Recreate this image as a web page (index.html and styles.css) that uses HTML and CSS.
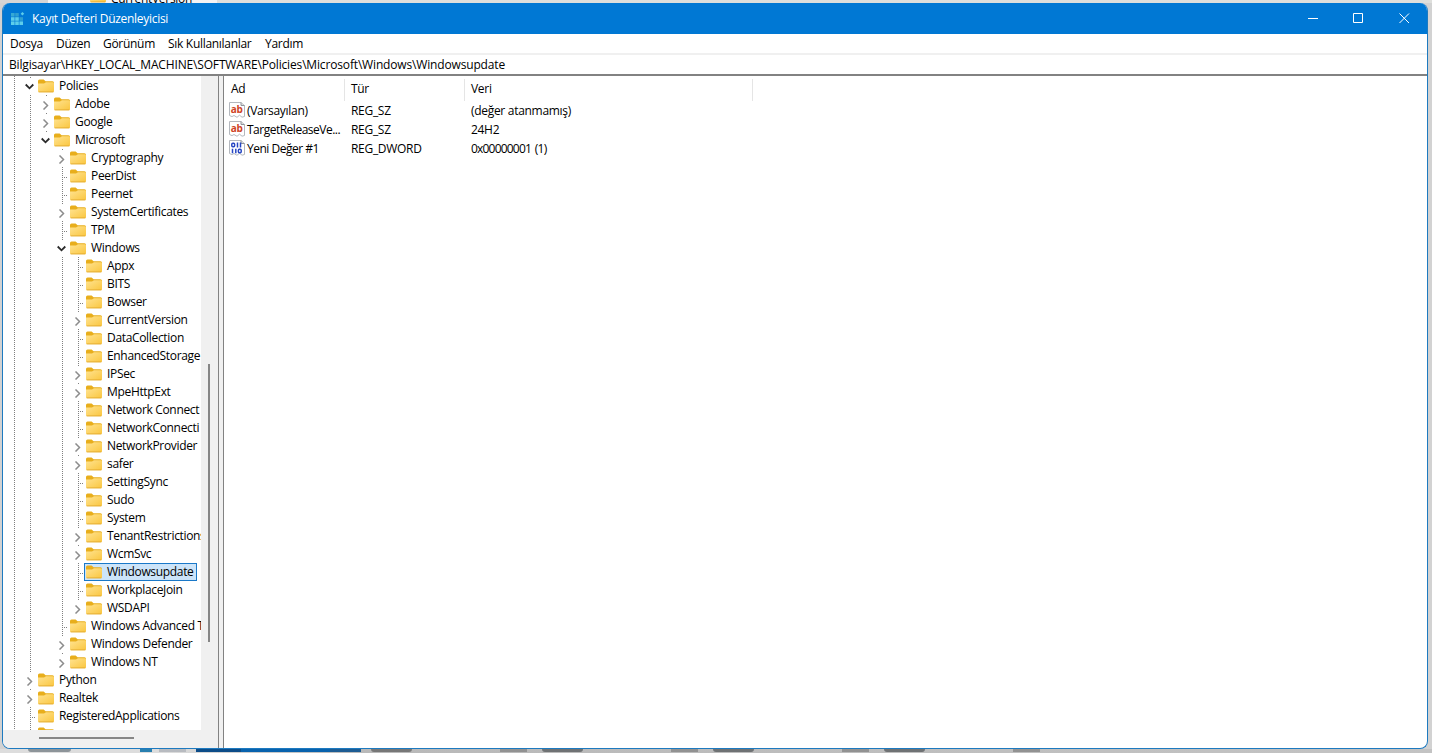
FILE: index.html
```
<!doctype html>
<html lang="tr">

<head>
    <meta charset="utf-8">
    <meta name="viewport" content="width=device-width, initial-scale=1">
    <title>Kayıt Defteri Düzenleyicisi</title>
    <link rel="stylesheet" href="styles.css">
</head>

<body>
    <svg width="0" height="0">
        <defs>
            <linearGradient id="gold" x1="0" y1="0" x2="1" y2="1">
                <stop offset="0" stop-color="#ffe391"/>
                <stop offset="1" stop-color="#fac63f"/>
            </linearGradient>
        </defs>
        <symbol id="folder" viewBox="0 0 16 14">
            <path d="M0 2Q0 .5 1.5 .5H5.6L7.6 2.3H14.5Q16 2.3 16 3.8V7H0Z" fill="#e8ae1c"/>
            <path d="M0 4.6H6L8 3.2H14.8Q16 3.2 16 4.4V12Q16 13.2 14.8 13.2H1.2Q0 13.2 0 12Z" fill="url(#gold)"/>
            <path d="M.6 12.9H15.4" stroke="#dfa62c" stroke-width=".8"/>
        </symbol>
        <symbol id="right" viewBox="0 0 9 9">
            <path d="M2.5 .5L6.5 4.5L2.5 8.5" fill="none" stroke="#8c8c8c" stroke-width="1.5"/>
        </symbol>
        <symbol id="down" viewBox="0 0 9 9">
            <path d="M.7 1.5L4.5 5.3L8.3 1.5" fill="none" stroke="#2b2b2b" stroke-width="1.8"/>
        </symbol>
        <symbol id="page" viewBox="0 0 16 16">
            <path d="M.5 .5H12L15.5 3.5V14.5L13 15.2L10.5 13.2L8 15.3L5 13.5L3 14.6L.5 13.5Z" fill="#fff" stroke="#b4b8be"/>
            <path d="M12 .5V3.5H15.5" fill="#ddd" stroke="#8f959c"/>
        </symbol>
        <symbol id="binary" viewBox="0 0 16 16">
            <use href="#page"/>
            <g fill="none" stroke="#2747c4" stroke-width="1.5">
                <rect x="2.8" y="3.2" width="2.8" height="3.6" rx="1"/>
                <path d="M8.5 2.5V7.5M11.5 2.5V7.5M3.5 8.7V13.2M6.8 8.7V13.2"/>
                <rect x="9.4" y="9.3" width="2.8" height="3.4" rx="1"/>
            </g>
        </symbol>
    </svg>

    <div class="behind">
        <svg class="behind-folder" width="16" height="14"><use href="#folder"/></svg>
        <span class="behind-text">CurrentVersion</span>
    </div>

    <div class="window">
        <div class="titlebar">
            <svg class="app-icon" width="14" height="14" viewBox="0 0 14 14">
                <g fill="#5ccdea">
                    <rect x="0" y="1" width="3.6" height="3.6" fill="#35a9d4"/>
                    <rect x="4.2" y="1" width="3.6" height="3.6" fill="#2f9fd0"/>
                    <rect x="0" y="5.2" width="3.6" height="3.6"/>
                    <rect x="4.2" y="5.2" width="3.6" height="3.6"/>
                    <rect x="8.4" y="5.2" width="3.6" height="3.6" fill="#2f9fd0"/>
                    <rect x="0" y="9.4" width="3.6" height="3.6"/>
                    <rect x="4.2" y="9.4" width="3.6" height="3.6"/>
                    <rect x="8.4" y="9.4" width="3.6" height="3.6"/>
                    <path d="M11.4 0L13.2 1.7L11.4 3.4L9.7 1.7Z"/>
                </g>
            </svg>
            <span class="title">Kayıt Defteri Düzenleyicisi</span>
            <svg class="buttons" width="102" height="12" viewBox="0 0 102 12">
                <path d="M0 5.5H10M45.5 .5H54.5V9.5H45.5ZM91.5 .5L101 10M101 .5L91.5 10" fill="none" stroke="#fff"/>
            </svg>
        </div>

        <div class="menubar">
            <span class="m-file">Dosya</span>
            <span class="m-edit">Düzen</span>
            <span class="m-view">Görünüm</span>
            <span class="m-fav">Sık Kullanılanlar</span>
            <span>Yardım</span>
        </div>
        <div class="address">Bilgisayar\HKEY_LOCAL_MACHINE\SOFTWARE\Policies\Microsoft\Windows\Windowsupdate</div>

        <div class="main">
            <div class="side">
                <div class="side-top">
                    <div class="tree">
                        <ul class="root">
                            <li>
                                <div class="row"><i><svg><use href="#down"/></svg></i><span><svg><use href="#folder"/></svg>Policies</span></div>
                                <ul>
                                    <li><div class="row"><i><svg><use href="#right"/></svg></i><span><svg><use href="#folder"/></svg>Adobe</span></div></li>
                                    <li><div class="row"><i><svg><use href="#right"/></svg></i><span><svg><use href="#folder"/></svg>Google</span></div></li>
                                    <li>
                                        <div class="row"><i><svg><use href="#down"/></svg></i><span><svg><use href="#folder"/></svg>Microsoft</span></div>
                                        <ul>
                                            <li><div class="row"><i><svg><use href="#right"/></svg></i><span><svg><use href="#folder"/></svg>Cryptography</span></div></li>
                                            <li><div class="row leaf"><i></i><span><svg><use href="#folder"/></svg>PeerDist</span></div></li>
                                            <li><div class="row leaf"><i></i><span><svg><use href="#folder"/></svg>Peernet</span></div></li>
                                            <li><div class="row"><i><svg><use href="#right"/></svg></i><span><svg><use href="#folder"/></svg>SystemCertificates</span></div></li>
                                            <li><div class="row leaf"><i></i><span><svg><use href="#folder"/></svg>TPM</span></div></li>
                                            <li>
                                                <div class="row"><i><svg><use href="#down"/></svg></i><span><svg><use href="#folder"/></svg>Windows</span></div>
                                                <ul>
                                                    <li><div class="row leaf"><i></i><span><svg><use href="#folder"/></svg>Appx</span></div></li>
                                                    <li><div class="row leaf"><i></i><span><svg><use href="#folder"/></svg>BITS</span></div></li>
                                                    <li><div class="row leaf"><i></i><span><svg><use href="#folder"/></svg>Bowser</span></div></li>
                                                    <li><div class="row"><i><svg><use href="#right"/></svg></i><span><svg><use href="#folder"/></svg>CurrentVersion</span></div></li>
                                                    <li><div class="row leaf"><i></i><span><svg><use href="#folder"/></svg>DataCollection</span></div></li>
                                                    <li><div class="row leaf"><i></i><span><svg><use href="#folder"/></svg>EnhancedStorage</span></div></li>
                                                    <li><div class="row"><i><svg><use href="#right"/></svg></i><span><svg><use href="#folder"/></svg>IPSec</span></div></li>
                                                    <li><div class="row"><i><svg><use href="#right"/></svg></i><span><svg><use href="#folder"/></svg>MpeHttpExt</span></div></li>
                                                    <li><div class="row leaf"><i></i><span><svg><use href="#folder"/></svg>Network Connect</span></div></li>
                                                    <li><div class="row leaf"><i></i><span><svg><use href="#folder"/></svg>NetworkConnecti</span></div></li>
                                                    <li><div class="row"><i><svg><use href="#right"/></svg></i><span><svg><use href="#folder"/></svg>NetworkProvider</span></div></li>
                                                    <li><div class="row"><i><svg><use href="#right"/></svg></i><span><svg><use href="#folder"/></svg>safer</span></div></li>
                                                    <li><div class="row leaf"><i></i><span><svg><use href="#folder"/></svg>SettingSync</span></div></li>
                                                    <li><div class="row leaf"><i></i><span><svg><use href="#folder"/></svg>Sudo</span></div></li>
                                                    <li><div class="row leaf"><i></i><span><svg><use href="#folder"/></svg>System</span></div></li>
                                                    <li><div class="row"><i><svg><use href="#right"/></svg></i><span><svg><use href="#folder"/></svg>TenantRestrictions</span></div></li>
                                                    <li><div class="row"><i><svg><use href="#right"/></svg></i><span><svg><use href="#folder"/></svg>WcmSvc</span></div></li>
                                                    <li><div class="row leaf"><i></i><span class="selected"><svg><use href="#folder"/></svg>Windowsupdate</span></div></li>
                                                    <li><div class="row leaf"><i></i><span><svg><use href="#folder"/></svg>WorkplaceJoin</span></div></li>
                                                    <li><div class="row"><i><svg><use href="#right"/></svg></i><span><svg><use href="#folder"/></svg>WSDAPI</span></div></li>
                                                </ul>
                                            </li>
                                            <li><div class="row leaf"><i></i><span><svg><use href="#folder"/></svg>Windows Advanced T</span></div></li>
                                            <li><div class="row"><i><svg><use href="#right"/></svg></i><span><svg><use href="#folder"/></svg>Windows Defender</span></div></li>
                                            <li><div class="row"><i><svg><use href="#right"/></svg></i><span><svg><use href="#folder"/></svg>Windows NT</span></div></li>
                                        </ul>
                                    </li>
                                </ul>
                            </li>
                            <li><div class="row"><i><svg><use href="#right"/></svg></i><span><svg><use href="#folder"/></svg>Python</span></div></li>
                            <li><div class="row"><i><svg><use href="#right"/></svg></i><span><svg><use href="#folder"/></svg>Realtek</span></div></li>
                            <li><div class="row leaf"><i></i><span><svg><use href="#folder"/></svg>RegisteredApplications</span></div></li>
                            <li><div class="row"><i></i><span><svg><use href="#folder"/></svg></span></div></li>
                        </ul>
                    </div>
                    <div class="vscroll"><div class="vthumb"></div></div>
                </div>
                <div class="hscroll"><div class="hthumb"></div></div>
            </div>
            <div class="splitter"></div>
            <div class="values">
                <div class="grid head">
                    <div>Ad</div>
                    <div>Tür</div>
                    <div>Veri</div>
                </div>
                <div class="grid">
                    <div class="name"><svg><use href="#page"/><text class="ab" x="1.8" y="11">ab</text></svg><span>(Varsayılan)</span></div>
                    <div>REG_SZ</div>
                    <div>(değer atanmamış)</div>
                </div>
                <div class="grid">
                    <div class="name"><svg><use href="#page"/><text class="ab" x="1.8" y="11">ab</text></svg><span class="tight">TargetReleaseVe...</span></div>
                    <div>REG_SZ</div>
                    <div>24H2</div>
                </div>
                <div class="grid">
                    <div class="name"><svg><use href="#binary"/></svg><span class="tight">Yeni Değer #1</span></div>
                    <div>REG_DWORD</div>
                    <div class="hex">0x00000001 (1)</div>
                </div>
            </div>
        </div>
    </div>

    <div class="taskbar">
        <b class="t1"></b><b class="t2"></b><b class="t3"></b><b class="t4"></b><b class="t5"></b>
        <b class="t6"></b><b class="t7"></b><b class="t6"></b><b class="t7"></b><b class="t6"></b><b class="t7"></b><b class="t6"></b>
    </div>
</body>

</html>
```
FILE: styles.css
```
* {
    box-sizing: border-box;
}

body {
    margin: 0;
    width: 1432px;
    height: 753px;
    overflow: hidden;
    background: #d2d2d2;
    color: #000;
    font-family: "Open Sans", "Noto Sans", sans-serif;
    font-size: 12px;
    letter-spacing: -0.3px;
    white-space: nowrap;
}

svg {
    display: block;
    flex: none;
}

/* window behind, only its last pixels show */
.behind {
    height: 3px;
    padding-left: 90px;
    display: flex;
    align-items: flex-end;
    gap: 5px;
    overflow: hidden;
    background: linear-gradient(to right, #d5d5d5 0 48px, #f3f3f3 48px 217px, #dedfdc 217px);
}

.behind-text {
    line-height: 8px;
}

.window {
    width: 1426px;
    height: 746px;
    margin-left: 2px;
    display: flex;
    flex-direction: column;
    border: 1px solid #1d7ac0;
    border-top: 0;
    border-radius: 8px;
    overflow: hidden;
    background: #fff;
}

.titlebar {
    height: 31px;
    flex: none;
    display: flex;
    align-items: center;
    padding: 0 17px 0 8px;
    background: #0078d4;
    color: #fff;
}

.title {
    margin-left: 7px;
}

.buttons {
    margin-left: auto;
}

.menubar {
    height: 21px;
    flex: none;
    display: flex;
    align-items: center;
    padding-left: 7px;
    border-bottom: 2px solid #f0f0f0;
}

.m-file {
    width: 46px;
}

.m-edit {
    width: 47px;
}

.m-view {
    width: 65px;
}

.m-fav {
    width: 97px;
}

.address {
    height: 21px;
    flex: none;
    padding-left: 6px;
    line-height: 20px;
    letter-spacing: -0.16px;
    border-bottom: 2px solid #828282;
}

.main {
    flex: 1;
    display: flex;
    min-height: 0;
}

.side {
    width: 215px;
    display: flex;
    flex-direction: column;
    background: #f0f0f0;
}

.side-top {
    height: 654px;
    display: flex;
}

.tree {
    width: 198px;
    height: 654px;
    padding: 1px 0 0 19px;
    overflow: hidden;
    background: repeating-linear-gradient(to bottom, #808080 0 1px, transparent 1px 2px) 11px 0 / 1px 100% no-repeat #fff;
}

ul {
    margin: 0;
    padding: 0;
    list-style: none;
}

ul ul {
    margin-left: 16px;
}

/* dotted guide between siblings */
li {
    background: repeating-linear-gradient(to bottom, #808080 0 1px, transparent 1px 2px) 8px 0 / 1px 100% no-repeat;
}

li:last-child {
    background-size: 1px 10px;
}

.row {
    height: 18px;
    display: flex;
}

.row i {
    width: 14px;
    height: 18px;
    flex: none;
    padding: 2px 0 0 2px;
}

.row i svg {
    width: 11px;
    height: 15px;
    padding: 4px 1px 2px;
    background: #fff;
}

.leaf i {
    background: repeating-linear-gradient(to right, #808080 0 1px, transparent 1px 2px) 8px 10px / 7px 1px no-repeat;
}

.row span {
    height: 18px;
    display: flex;
    align-items: center;
    padding: 0 2px 0 1px;
    border: 1px solid transparent;
    line-height: 14px;
    letter-spacing: -0.33px;
}

.row span svg {
    width: 16px;
    height: 14px;
    margin-right: 5px;
}

.row .selected {
    padding-right: 3px;
    background: #cce4f9;
    border-color: #1a78c8;
}

.vscroll {
    width: 17px;
    padding: 288px 0 0 7px;
}

.vthumb {
    width: 2px;
    height: 278px;
    background: #868686;
}

.hscroll {
    padding: 7px 0 0 36px;
}

.hthumb {
    width: 95px;
    height: 2px;
    background: #868686;
}

.splitter {
    width: 6px;
    border: solid #828282;
    border-width: 0 1px;
    background: #f0f0f0;
}

.values {
    flex: 1;
    padding-top: 3px;
}

.grid {
    height: 19px;
    display: grid;
    grid-template-columns: 121px 120px 288px;
    align-items: center;
}

.grid div {
    padding-left: 6px;
}

.head {
    height: 22px;
}

.head div {
    height: 22px;
    line-height: 20px;
    padding-left: 7px;
    border-right: 1px solid #e5e5e5;
}

.head div + div {
    padding-left: 6px;
}

.grid .name {
    display: flex;
    gap: 2px;
    padding-left: 5px;
}

.name svg {
    width: 16px;
    height: 16px;
}

.name .tight {
    letter-spacing: -0.5px;
}

.grid .hex {
    letter-spacing: -0.8px;
    word-spacing: 1.5px;
}

.ab {
    font: bold 10px "Open Sans", sans-serif;
    fill: #cf4427;
}

.taskbar {
    height: 4px;
    display: flex;
    padding-left: 28px;
    background: linear-gradient(to right, #ddd 0 160px, #b9b9b9 360px, #c3c3c3);
}

.taskbar b {
    height: 3px;
    flex: none;
}

.t1 {
    width: 43px;
    background: #8d9499;
    border-radius: 0 0 6px 6px;
}

.t2 {
    width: 12px;
    margin-left: 69px;
    background: #287faf;
}

.t3 {
    width: 27px;
    margin-left: 7px;
    background: #b8bbc0;
}

.t4 {
    width: 165px;
    margin-left: 10px;
    background: linear-gradient(to right, #0c4c88 45px, #0862ad 45px 134px, #1d5c93 134px);
}

.t5 {
    width: 41px;
    margin-left: 10px;
    background: #777;
    border-radius: 0 0 6px 6px;
}

.t6 {
    width: 27px;
    margin-left: 88px;
    background: #929292;
}

.t7 {
    width: 41px;
    margin-left: 15px;
    background: #6f7274;
    border-radius: 0 0 6px 6px;
}
```
